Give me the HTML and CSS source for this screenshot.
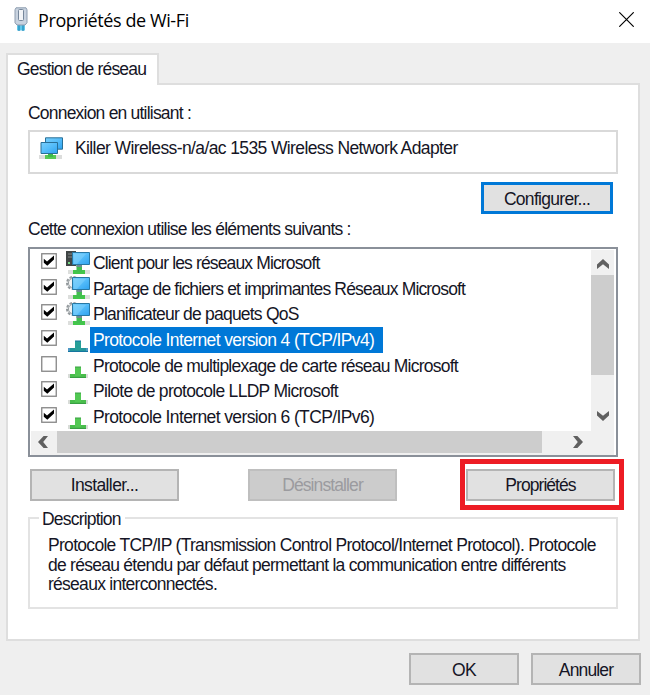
FILE: index.html
```html
<!DOCTYPE html>
<html lang="fr">
<head>
<meta charset="utf-8">
<title>Propriétés de Wi-Fi</title>
<link rel="stylesheet" href="styles.css">
</head>
<body>
<svg width="0" height="0" class="defs">
  <defs>
    <linearGradient id="screen" x1="0" y1="0" x2="1" y2="1"><stop offset="0" stop-color="#79cffb"/><stop offset=".5" stop-color="#55bdfa"/><stop offset="1" stop-color="#2ea2ef"/></linearGradient>
    <symbol id="check" viewBox="0 0 16 16"><rect x=".75" y=".75" width="14.5" height="14.5" fill="#fff" stroke="#858585" stroke-width="1.3"/><path d="M2.8 5.8l3.2 2.6L13 2.6v4L6.3 12.8 2.8 9.8z" fill="#000"/></symbol>
    <symbol id="uncheck" viewBox="0 0 16 16"><rect x=".75" y=".75" width="14.5" height="14.5" fill="#fff" stroke="#858585" stroke-width="1.3"/></symbol>
    <symbol id="monitor" viewBox="0 0 24 24"><path d="M2 19h22v4H2z" fill="#dcdedc"/><path d="M7 19h12v4H7z" fill="#42c64a"/><path d="M10.5 14h5.5v7h-5.5z" fill="#42bd50"/><path d="M10.5 14H16v2h-5.500z" fill="#6d8c92"/><path d="M6.500 1.500h17v12h-17z" fill="url(#screen)" stroke="#2878a4"/><path d="M8 3h12l-9 10H8z" fill="#91d9fc" opacity=".4"/></symbol>
    <symbol id="client" viewBox="0 0 24 24"><path d="M0 0h10v15H0z" fill="#414646"/><path d="M2 3h5M2 6h5" stroke="#858989"/><path d="M2 12h2" stroke="#76d884" stroke-width="2"/><use href="#monitor"/></symbol>
    <symbol id="service" viewBox="0 0 24 24"><circle cx="7" cy="7" r="6" fill="#e4e7e8" stroke="#93999c" stroke-width="2" stroke-dasharray="2.5 1.5"/><circle cx="7" cy="7" r="4.600" fill="#f2f3f3" stroke="#9ba2a5"/><use href="#monitor"/></symbol>
    <symbol id="protocol" viewBox="0 0 22 12"><path d="M1 8h20v4H1z" fill="#d8dcd8"/><path d="M3 8h16v4H3z" fill="#49bd4c"/><path d="M8 1h6v9H8z" fill="#52c853"/><path d="M8 1h6M3 11.500h16" stroke="#389f43"/></symbol>
    <symbol id="protocol-selected" viewBox="0 0 22 12"><path d="M1 8h20v4H1z" fill="#4e98c5"/><path d="M3 8h16v4H3z" fill="#24959b"/><path d="M8 1h6v9H8z" fill="#279f98"/><path d="M8 1h6M1 11.500h20" stroke="#15769f"/></symbol>
    <symbol id="chevron" viewBox="0 0 12 10"><path d="M6 0l6 5.600V10L6 5.200 0 10V5.600z" fill="#606060"/></symbol>
  </defs>
</svg>
<header class="titlebar">
  <svg class="plug" viewBox="0 0 14 25"><path d="M3 17.500h8v6H3z" fill="#62c7ea"/><path d="M5 18v6M9 18v6" stroke="#238fbc" stroke-width="1.3"/><path d="M2 .8h10l1 2v13L11 18H3l-2-2.200v-13z" fill="#c8d2df" stroke="#8e9db0"/><rect x="4.500" y="2.500" width="5" height="11" rx="1" fill="#f2f4f7" stroke="#76879b"/></svg>
  <h1>Propriétés de Wi-Fi</h1>
  <svg class="close" viewBox="0 0 15 15"><path d="M.3.3l14.4 14.4M14.7.3L.3 14.7" stroke="#000" stroke-width="1.15"/></svg>
</header>
<div class="tab"><span class="t-tab">Gestion de réseau</span></div>
<main class="panel">
  <p class="label"><span class="t-using">Connexion en utilisant :</span></p>
  <div class="adapter">
    <svg viewBox="0 0 24 24"><path d="M0 18h23v4H0z" fill="#dcdddc"/><path d="M6 18h11v4H6z" fill="#56c955"/><path d="M9 15h5v5H9z" fill="#3eb84b"/><path d="M6.5 .8h17v11.400h-17z" fill="url(#screen)" stroke="#286f97"/><path d="M2 5.500h16.500v11H2z" fill="url(#screen)" stroke="#286f97"/></svg>
    <span class="t-adapter">Killer Wireless-n/a/ac 1535 Wireless Network Adapter</span>
  </div>
  <div class="configure"><button class="focus"><span class="t-config">Configurer...</span></button></div>
  <p class="label elements"><span class="t-elements">Cette connexion utilise les éléments suivants :</span></p>
  <section class="list">
    <div class="rows">
      <div class="row"><svg class="box"><use href="#check"/></svg><svg class="icon"><use href="#client"/></svg><span class="name t-r1">Client pour les réseaux Microsoft</span></div>
      <div class="row"><svg class="box"><use href="#check"/></svg><svg class="icon"><use href="#service"/></svg><span class="name t-r2">Partage de fichiers et imprimantes Réseaux Microsoft</span></div>
      <div class="row"><svg class="box"><use href="#check"/></svg><svg class="icon"><use href="#service"/></svg><span class="name t-r3">Planificateur de paquets QoS</span></div>
      <div class="row"><svg class="box"><use href="#check"/></svg><svg class="icon proto"><use href="#protocol-selected"/></svg><span class="name selected t-r4">Protocole Internet version 4 (TCP/IPv4)</span></div>
      <div class="row"><svg class="box"><use href="#uncheck"/></svg><svg class="icon proto"><use href="#protocol"/></svg><span class="name t-r5">Protocole de multiplexage de carte réseau Microsoft</span></div>
      <div class="row"><svg class="box"><use href="#check"/></svg><svg class="icon proto"><use href="#protocol"/></svg><span class="name t-r6">Pilote de protocole LLDP Microsoft</span></div>
      <div class="row"><svg class="box"><use href="#check"/></svg><svg class="icon proto"><use href="#protocol"/></svg><span class="name t-r7">Protocole Internet version 6 (TCP/IPv6)</span></div>
    </div>
    <div class="vscroll"><svg><use href="#chevron"/></svg><i></i><svg class="down"><use href="#chevron"/></svg></div>
    <div class="hscroll"><svg class="left"><use href="#chevron"/></svg><i></i><svg class="right"><use href="#chevron"/></svg></div>
  </section>
  <div class="actions">
    <button><span class="t-install">Installer...</span></button>
    <button class="disabled" disabled><span class="t-uninstall">Désinstaller</span></button>
    <button class="marked"><span class="t-props">Propriétés</span></button>
  </div>
  <section class="description">
    <h2><span class="t-desc">Description</span></h2>
    <p><span class="t-d1">Protocole TCP/IP (Transmission Control Protocol/Internet Protocol). Protocole</span><br><span class="t-d2">de réseau étendu par défaut permettant la communication entre différents</span><br><span class="t-d3">réseaux interconnectés.</span></p>
  </section>
</main>
<footer><button><span class="t-ok">OK</span></button><button><span class="t-cancel">Annuler</span></button></footer>
</body>
</html>
```
FILE: styles.css
```css
* { box-sizing: border-box; }
body { margin: 0; width: 650px; height: 695px; overflow: hidden; background: #efefef; color: #151525; font: 17.5px/20px "Liberation Sans", Arial, sans-serif; }
h1, h2, p { margin: 0; font-weight: 400; }
svg { display: block; flex: none; }
span { white-space: nowrap; }
.defs { position: absolute; }
.titlebar { height: 43px; background: #fff; display: flex; align-items: flex-start; padding: 7px 16px 0 14px; color: #000; }
.plug { width: 14px; height: 25px; }
h1 { font: 18px/26px "Open Sans", "Noto Sans", sans-serif; margin-left: 10px; letter-spacing: -.4px; }
.close { width: 15px; height: 15px; margin: 5px 0 0 auto; }
.tab { position: relative; z-index: 1; width: 153px; height: 32px; margin: 10px 0 0 6px; padding: 4px 0 0 9px; background: #fff; border: 2px solid #dedede; border-bottom: 0; }
.panel { width: 634px; height: 558px; margin: -2px 0 0 6px; padding: 18px 20px 0; background: #fff; border: 2px solid #dedede; }
.label { height: 20px; }
.adapter { height: 44px; margin-top: 7px; border: 2px solid #d9d9d9; display: flex; padding: 5px 0 0 9px; }
.adapter svg { width: 24px; height: 24px; margin-right: 12px; }
.adapter span { margin-top: 1px; }
.configure { display: flex; justify-content: flex-end; margin: 8px 5px 0 0; }
button { width: 149px; height: 32px; padding: 0; font: inherit; color: inherit; background: #e1e1e1; border: 2px solid #b4b4b4; border-radius: 0; }
.focus { width: 132px; padding-top: 1px; border: 3px solid #0078d7; }
.elements { margin-top: 5px; }
.list { width: 590px; height: 210px; margin-top: 8px; border: 2px solid #8a9099; display: grid; grid-template: 181px 24px / 560px 23px; padding: 1px; }
.rows { padding: 0 0 0 10px; height: 181px; overflow: hidden; }
.row { height: 25.6px; display: flex; align-items: center; }
.box { width: 16px; height: 16px; margin-top: -3px; }
.icon { width: 24px; height: 24px; margin-left: 9px; }
.proto { width: 22px; height: 12px; align-self: flex-end; margin: 0 1px 0 10px; }
.name { height: 25px; line-height: 27px; padding-left: 3px; }
.selected { width: 293px; height: 26px; color: #fff; background: #0078d7; }
.vscroll { background: #f0f0f0; display: flex; flex-direction: column; align-items: center; padding-top: 9px; }
.vscroll svg { width: 12px; height: 10px; }
.vscroll i { width: 23px; height: 100px; background: #cdcdcd; margin-top: 6px; }
.vscroll .down { transform: rotate(180deg); margin-top: 36px; }
.hscroll { grid-column: 1 / 3; display: flex; align-items: flex-start; background: #f0f0f0; padding-left: 6px; }
.hscroll svg { width: 12px; height: 10px; margin-top: 6px; }
.hscroll i { width: 485px; height: 22px; background: #cdcdcd; margin-left: 8px; }
.left { transform: rotate(-90deg); }
.right { transform: rotate(90deg); margin-left: 30px; }
.actions { display: flex; gap: 69px; padding-left: 2px; margin-top: 12px; }
.disabled { color: #9b9b9f; background: #ccc; border-color: #bfbfbf; }
.marked { position: relative; }
.marked::after { content: ""; position: absolute; inset: -12px -11px -11px -8px; border: 5px solid #ed1c24; }
.description { height: 92px; margin-top: 16px; border: 2px solid #e3e3e3; }
h2 { width: 86px; height: 20px; margin: -10px 0 0 9px; padding-left: 3px; background: #fff; font: inherit; }
.description p { padding: 7px 0 0 18px; line-height: 19.7px; }
footer { display: flex; justify-content: flex-end; gap: 12px; margin: 12px 9px 0; }
footer button { width: 110px; padding-top: 1px; }

/* Tight dialog-face spacing, tuned per caption */
.t-tab { letter-spacing: -.82px; }
.t-using { letter-spacing: -.79px; }
.t-adapter { letter-spacing: -.61px; }
.t-config { letter-spacing: -.7px; }
.t-elements { letter-spacing: -.75px; }
.t-r1 { letter-spacing: -.86px; }
.t-r2 { letter-spacing: -.83px; }
.t-r3 { letter-spacing: -.79px; }
.t-r4, .t-r7 { letter-spacing: -.62px; }
.t-r5 { letter-spacing: -.76px; }
.t-r6 { letter-spacing: -.71px; }
.t-install { letter-spacing: -.6px; }
.t-uninstall { letter-spacing: -.9px; }
.t-props { letter-spacing: -.95px; }
.t-desc { letter-spacing: -.8px; }
.t-d1 { letter-spacing: -.7px; }
.t-d2 { letter-spacing: -.74px; }
.t-d3 { letter-spacing: -.73px; }
.t-ok { letter-spacing: -.6px; }
.t-cancel { letter-spacing: -.85px; }
```
